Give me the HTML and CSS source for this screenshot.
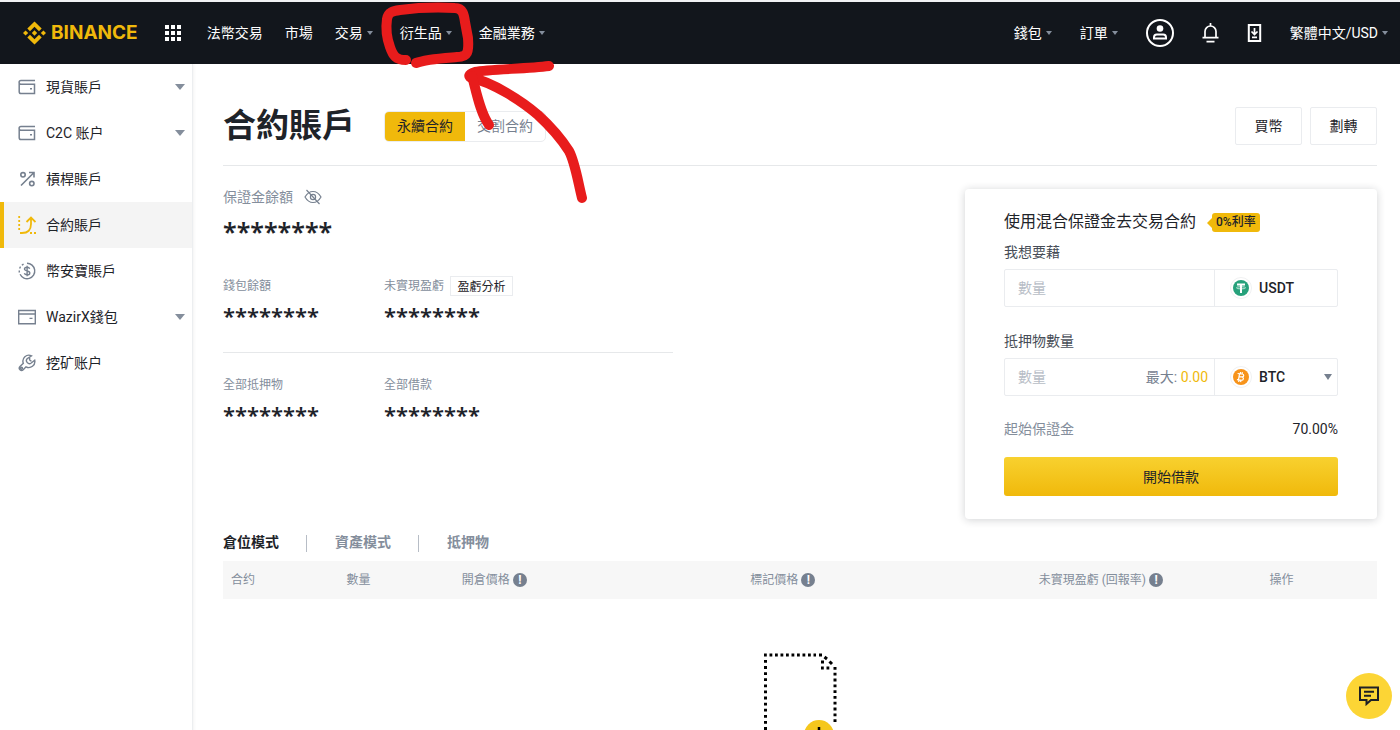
FILE: index.html
```html
<!DOCTYPE html>
<html lang="zh-Hant">
<head>
<meta charset="UTF-8">
<meta name="viewport" content="width=device-width, initial-scale=1.0">
<title>合約賬戶</title>
<link rel="stylesheet" href="styles.css">
</head>
<body>
<header class="header">
  <a class="logo" href="#">
    <svg width="23" height="24" viewBox="0 0 24 24" fill="#f0b90b">
      <path d="M7.3 10.1 12 5.4l4.7 4.7 2.8-2.7L12 0 4.5 7.4zM0 12l2.7-2.7L5.4 12l-2.7 2.7zM7.3 13.9l4.7 4.7 4.7-4.7 2.8 2.7L12 24l-7.5-7.4zM18.6 12l2.7-2.7L24 12l-2.7 2.7zM12 9.2l2.8 2.8-2.8 2.8L9.2 12z"/>
    </svg>
    <span>BINANCE</span>
  </a>
  <button class="icon-button apps" aria-label="apps">
    <svg width="16" height="16" viewBox="0 0 16 16" fill="#fff">
      <path d="M0 0h4v4H0zM6 0h4v4H6zM12 0h4v4h-4zM0 6h4v4H0zM6 6h4v4H6zM12 6h4v4h-4zM0 12h4v4H0zM6 12h4v4H6zM12 12h4v4h-4z"/>
    </svg>
  </button>
  <nav class="nav">
    <a href="#">法幣交易</a>
    <a href="#">市場</a>
    <a class="has-menu" href="#">交易</a>
    <a class="has-menu" href="#">衍生品</a>
    <a class="has-menu" href="#">金融業務</a>
  </nav>
  <div class="tools">
    <a class="tool-menu" href="#">錢包</a>
    <a class="tool-menu" href="#">訂單</a>
    <button class="icon-button" aria-label="account">
      <svg width="28" height="28" viewBox="0 0 28 28" fill="none" stroke="#fff" stroke-width="2">
        <circle cx="14" cy="14" r="13"/>
        <circle cx="14" cy="9.5" r="3.3" fill="#fff" stroke="none"/>
        <path d="M8 19.5v-1.2q0-2.8 2.8-2.8h6.4q2.8 0 2.8 2.8v1.2z"/>
      </svg>
    </button>
    <button class="icon-button" aria-label="notifications">
      <svg width="17" height="20" viewBox="0 0 17 20" fill="none" stroke="#fff" stroke-width="1.7">
        <path d="M8.5 0v3M3 14.5V8.5a5.5 5.5 0 0 1 11 0v6M.5 14.6h16M4.5 18.6h8"/>
      </svg>
    </button>
    <button class="icon-button" aria-label="download">
      <svg width="15" height="18" viewBox="0 0 15 18" fill="none" stroke="#fff" stroke-width="2">
        <path d="M1.8 1h11.4v16H1.8z"/>
        <path d="M7.5 4v6M4.5 7.5l3 3 3-3M5 13.3h5" stroke-width="1.7"/>
      </svg>
    </button>
    <a class="tool-menu" href="#">繁體中文/USD</a>
  </div>
</header>

<div class="page">
  <aside class="sidebar">
    <a class="side-item expandable" href="#">
      <svg class="side-icon" viewBox="0 0 18 18" fill="none" stroke="#76808f" stroke-width="1.5">
        <path d="M17 2.500H3a1.800 1.800 0 0 0 0 3.800H16.500v9.200H3q-1.800 0-1.800-1.800V4.500"/><path d="M12 10.800h2"/>
      </svg>
      <span>現貨賬戶</span>
    </a>
    <a class="side-item expandable" href="#">
      <svg class="side-icon" viewBox="0 0 18 18" fill="none" stroke="#76808f" stroke-width="1.5">
        <path d="M17 2.500H3a1.800 1.800 0 0 0 0 3.800H16.500v9.200H3q-1.800 0-1.800-1.800V4.500"/><path d="M12 10.800h2"/>
      </svg>
      <span>C2C 账户</span>
    </a>
    <a class="side-item" href="#">
      <svg class="side-icon" viewBox="0 0 18 18" fill="none" stroke="#76808f" stroke-width="1.6">
        <circle cx="5" cy="4.800" r="2.200"/><circle cx="13.800" cy="13.600" r="2.200"/><path d="M3 15.500 15.500 3M11 2.500h5v5"/>
      </svg>
      <span>槓桿賬戶</span>
    </a>
    <a class="side-item active" href="#">
      <svg class="side-icon" viewBox="0 0 18 18" fill="none" stroke="#f0b90b" stroke-width="1.8">
        <path d="M2 17h2c6 0 9-3 9-9V1.500M8.500 6 13 1.500 17.500 6"/>
        <path d="M1.200 0v14" stroke-dasharray="2 2"/><path d="M12 17h6" stroke-dasharray="2 2"/>
      </svg>
      <span>合約賬戶</span>
    </a>
    <a class="side-item" href="#">
      <svg class="side-icon" viewBox="0 0 18 18" fill="none" stroke="#76808f" stroke-width="1.4">
        <path d="M9 1.300a7.700 7.700 0 1 1-6.900 11"/><path d="M1.400 10.500A7.700 7.700 0 0 1 7.300 1.500" stroke-dasharray="2 2"/>
        <path d="M11.700 6.700c-.4-1-1.400-1.400-2.600-1.400-1.500 0-2.600.6-2.600 1.800 0 2.600 5.300 1.100 5.300 3.800 0 1.200-1.200 1.900-2.700 1.900-1.300 0-2.400-.5-2.800-1.600M9.100 3.800v10.500"/>
      </svg>
      <span>幣安寶賬戶</span>
    </a>
    <a class="side-item expandable" href="#">
      <svg class="side-icon" viewBox="0 0 18 18" fill="none" stroke="#76808f" stroke-width="1.4">
        <path d="M.7 2.500h16.600v13.200H.7zM.7 6h16.600M11.500 10.400h3"/>
      </svg>
      <span>WazirX錢包</span>
    </a>
    <a class="side-item" href="#">
      <svg class="side-icon" viewBox="0 0 18 18" fill="none" stroke="#76808f" stroke-width="1.4">
        <path d="M13.500 1.800A6 6 0 0 0 5.300 9.300L2 12.600a2.100 2.100 0 0 0 3.200 3.200L8 12.800a6 6 0 0 0 8.700-6.600L13.200 9a3 3 0 0 1-4.100-4.300z"/>
        <circle cx="3.500" cy="14.300" r="1"/><path d="M12 3.500c-1 1.500-.5 3.500 1.500 3.500"/>
      </svg>
      <span>挖矿账户</span>
    </a>
  </aside>

  <main class="main">
    <div class="title-row">
      <h1>合約賬戶</h1>
      <div class="switch">
        <button class="switch-on">永續合約</button>
        <button>交割合約</button>
      </div>
      <div class="actions">
        <button>買幣</button>
        <button>劃轉</button>
      </div>
    </div>

    <div class="overview">
      <section class="balances">
        <div class="margin-label">
          <span>保證金餘額</span>
          <button class="icon-button" aria-label="show balance">
            <svg width="18" height="16" viewBox="0 0 18 16" fill="none" stroke="#76808f" stroke-width="1.2">
              <path d="M1 8q3.200-5.500 8-5.500T17 8q-3.200 5.500-8 5.500T1 8z"/><circle cx="9" cy="8" r="2.600"/><path d="M2.500 1l13 14"/>
            </svg>
          </button>
        </div>
        <div class="stars-large">********</div>
        <div class="balance-row">
          <div>
            <div class="small-label">錢包餘額</div>
            <div class="stars">********</div>
          </div>
          <div>
            <div class="small-label">未實現盈虧 <button class="analysis">盈虧分析</button></div>
            <div class="stars">********</div>
          </div>
        </div>
        <div class="balance-row">
          <div>
            <div class="small-label">全部抵押物</div>
            <div class="stars">********</div>
          </div>
          <div>
            <div class="small-label">全部借款</div>
            <div class="stars">********</div>
          </div>
        </div>
      </section>

      <form class="card">
        <div class="card-title">
          <h2>使用混合保證金去交易合約</h2>
          <span class="rate">0%利率</span>
        </div>
        <label class="field-label" for="borrow">我想要藉</label>
        <div class="field">
          <input id="borrow" type="text" placeholder="數量">
          <div class="coin">
            <svg width="22" height="22" viewBox="0 0 22 22">
              <circle cx="11" cy="11" r="10.500" fill="#fff" stroke="#f0f1f2"/>
              <circle cx="11" cy="11" r="8" fill="#26a17b"/>
              <path d="M7 7.500h8M11 7.500V16" fill="none" stroke="#fff" stroke-width="2"/>
              <ellipse cx="11" cy="10.800" rx="4.500" ry="1.100" fill="none" stroke="#fff" stroke-width=".7"/>
            </svg>
            <span>USDT</span>
          </div>
        </div>
        <label class="field-label collateral" for="collateral">抵押物數量</label>
        <div class="field">
          <input id="collateral" type="text" placeholder="數量">
          <span class="max">最大: <b>0.00</b></span>
          <div class="coin coin-select">
            <svg width="22" height="22" viewBox="0 0 22 22">
              <circle cx="11" cy="11" r="10.500" fill="#fff" stroke="#f0f1f2"/>
              <circle cx="11" cy="11" r="8" fill="#f7931a"/>
              <path d="M9.600 7.300 8.400 14.400M7.600 7.500l4.500.5c2.400.3 2 3-.2 2.900l-2.700-.2 2.500.3c2.600.4 2 3.500-.6 3.200l-4.200-.5M10.600 6l-.3 1.700M12.400 6.200l-.3 1.700M9 14.200l-.3 1.800M10.900 14.400l-.3 1.800" fill="none" stroke="#fff" stroke-width="1.2"/>
            </svg>
            <select aria-label="抵押物"><option>BTC</option></select>
          </div>
        </div>
        <div class="initial">
          <span>起始保證金</span>
          <span class="initial-value">70.00%</span>
        </div>
        <button class="submit" type="button">開始借款</button>
      </form>
    </div>

    <div class="tabs">
      <button class="tab-on">倉位模式</button>
      <button>資產模式</button>
      <button>抵押物</button>
    </div>
    <table class="positions">
      <thead>
        <tr>
          <th class="narrow">合约</th>
          <th class="narrow">數量</th>
          <th class="wide">開倉價格 <span class="info">!</span></th>
          <th class="wide">標記價格 <span class="info">!</span></th>
          <th class="medium">未實現盈虧 (回報率) <span class="info">!</span></th>
          <th class="narrow">操作</th>
        </tr>
      </thead>
    </table>
    <div class="empty">
      <svg width="74" height="96" viewBox="0 0 74 96" fill="none">
        <g stroke="#000" stroke-width="3">
          <path d="M1 2h52" stroke-dasharray="2.800 2.700"/>
          <path d="M2.500 7V94" stroke-dasharray="2.800 3.300"/>
          <path d="M72 14v56" stroke-dasharray="2.800 3"/>
          <path d="M56 2h3M61.500 4l2.500 2M66.500 8.500l2.500 2.500"/>
          <path d="M58 15h10" stroke-dasharray="2.800 2.700"/>
          <path d="M59.500 7.500v3"/>
        </g>
        <circle cx="56" cy="82" r="15" fill="#f5c71c"/>
        <path d="M56 74v16M48 82h16" stroke="#000" stroke-width="2.5"/>
      </svg>
    </div>
  </main>
</div>

<button class="chat" aria-label="chat">
  <svg width="22" height="20" viewBox="0 0 22 20" fill="none" stroke="#1e2026" stroke-width="2">
    <path d="M2 1.500h18v12.500h-7l-4.500 4v-4H2zM6 5.700h10M6 9.700h7"/>
  </svg>
</button>

<!-- hand-drawn marker pointing at the derivatives menu -->
<svg class="marker" width="600" height="210" viewBox="0 0 600 210" fill="none" stroke="#e81c1c" stroke-width="10" stroke-linecap="round" stroke-linejoin="round">
  <path d="M406 60C396 60 393 56 390 47C386 36 386 26 387 19C388 12 393 11 400 10C415 8 435 7 455 8C463 8 464 15 465 22L468 38C469 52 468 57 457 57C445 58 426 59 416 63"/>
  <path d="M549 66C526 69 490 69 475 72C468 74 468 77 472 78C492 82 522 101 538 115C550 126 562 140 569 151C575 162 578 182 582 198"/>
  <path d="M472 76C476 90 480 113 489 125"/>
</svg>
</body>
</html>
```
FILE: styles.css
```css
* {
  box-sizing: border-box;
}

body {
  margin: 0;
  height: 100vh;
  overflow: hidden;
  font-family: Roboto, "Noto Sans CJK TC", sans-serif;
  font-size: 14px;
  line-height: 20px;
  color: #1e2329;
  background-color: #fff;
}

a {
  color: inherit;
  text-decoration: none;
}

button, input, select {
  font: inherit;
  color: inherit;
  padding: 0;
  border: none;
  background: none;
}

button {
  cursor: pointer;
}

svg {
  display: block;
}

h1, h2 {
  margin: 0;
}

.header {
  display: flex;
  align-items: center;
  height: 64px;
  padding: 0 12px 0 23px;
  border-top: 2px solid #f1f2f4;
  background-color: #12161c;
  color: #fff;
}

.logo {
  display: flex;
  align-items: center;
  gap: 5px;
  color: #f0b90b;
  font-family: Inter, sans-serif;
  font-size: 19px;
  font-weight: 700;
}

.apps {
  margin: 0 26px 0 27px;
}

.nav {
  display: flex;
  gap: 22px;
}

.has-menu, .tool-menu {
  display: flex;
  align-items: center;
}

.has-menu::after, .tool-menu::after {
  content: "";
  margin-left: 4px;
  border: 3px solid transparent;
  border-top: 4px solid #848e9c;
  border-bottom: none;
}

.has-menu {
  padding-right: 5px;
}

.tools {
  display: flex;
  align-items: center;
  gap: 28px;
  margin-left: auto;
}

.page {
  display: flex;
}

.sidebar {
  flex: none;
  width: 193px;
  min-height: calc(100vh - 64px);
  border-right: 1px solid #eceef0;
  box-shadow: 1px 0 3px rgba(0, 0, 0, 0.05);
}

.side-item {
  display: flex;
  align-items: center;
  gap: 10px;
  height: 46px;
  padding: 0 7px 0 14px;
  border-left: 4px solid transparent;
}

.side-icon {
  width: 18px;
  height: 18px;
}

.side-item.active {
  border-left-color: #f0b90b;
  background-color: #f4f4f4;
}

.expandable::after {
  content: "";
  margin-left: auto;
  border: 5px solid transparent;
  border-top: 6px solid #848e9c;
  border-bottom: none;
}

.main {
  flex: 1;
  padding: 0 23px 0 30px;
}

.title-row {
  display: flex;
  align-items: center;
  padding: 43px 0 20px;
  border-bottom: 1px solid #e6e8ea;
}

.title-row h1 {
  font-size: 33px;
  font-weight: 700;
  line-height: 38px;
}

.switch {
  display: flex;
  height: 31px;
  margin-left: 29px;
  border: 1px solid #eaecef;
  border-radius: 5px;
  overflow: hidden;
  color: #76808f;
}

.switch button {
  width: 80px;
}

.switch .switch-on {
  background-color: #f0b90b;
  color: #1e2329;
}

.actions {
  display: flex;
  gap: 8px;
  margin-left: auto;
}

.actions button {
  width: 67px;
  height: 38px;
  border: 1px solid #eaecef;
  border-radius: 2px;
}

.overview {
  display: flex;
  justify-content: space-between;
  padding-bottom: 13px;
}

.balances {
  width: 450px;
  padding-top: 21px;
}

.margin-label {
  display: flex;
  align-items: center;
  gap: 11px;
  color: #848e9c;
}

.stars-large, .stars {
  font-family: "Noto Sans", sans-serif;
  font-weight: 600;
}

.stars-large {
  margin: 8px 0 29px;
  font-size: 25px;
  line-height: 32px;
}

.stars {
  margin-top: 6px;
  font-size: 22px;
  line-height: 26px;
}

.balance-row {
  display: grid;
  grid-template-columns: 161px 1fr;
}

.balance-row + .balance-row {
  margin-top: 24px;
  padding-top: 22px;
  border-top: 1px solid #e6e8ea;
}

.small-label {
  display: flex;
  align-items: center;
  gap: 6px;
  height: 20px;
  font-size: 12px;
  color: #848e9c;
}

.analysis {
  width: 63px;
  height: 20px;
  border: 1px solid #eaecef;
  color: #1e2329;
}

.card {
  width: 412px;
  margin-top: 23px;
  padding: 21px 39px 23px;
  border-radius: 4px;
  box-shadow: 0 1px 8px rgba(24, 32, 42, 0.2);
}

.card-title {
  display: flex;
  align-items: center;
  gap: 16px;
}

.card-title h2 {
  font-size: 16px;
  font-weight: 400;
  line-height: 24px;
}

.rate {
  position: relative;
  padding: 0 4px;
  border-radius: 3px;
  background-color: #f0b90b;
  font-size: 12px;
  font-weight: 500;
  line-height: 19px;
}

.rate::before {
  content: "";
  position: absolute;
  top: 5px;
  left: -5px;
  border: 5px solid transparent;
  border-right-color: #f0b90b;
  border-left: none;
}

.field-label {
  display: block;
  margin: 8px 0 7px;
  color: #474d57;
}

.collateral {
  margin-top: 24px;
}

.field {
  display: flex;
  align-items: center;
  height: 38px;
  border: 1px solid #eaecef;
  border-radius: 2px;
}

.field input {
  flex: 1;
  min-width: 0;
  padding-left: 13px;
}

.field input::placeholder {
  color: #b7bdc6;
}

.max {
  margin-right: 6px;
  color: #76808f;
}

.max b {
  color: #f0b90b;
  font-weight: 400;
}

.coin {
  display: flex;
  align-items: center;
  gap: 7px;
  width: 123px;
  height: 36px;
  padding: 0 5px 0 15px;
  border-left: 1px solid #eaecef;
  font-weight: 500;
}

.coin select {
  flex: 1;
  appearance: none;
}

.coin-select::after {
  content: "";
  border: 4px solid transparent;
  border-top: 6px solid #76808f;
  border-bottom: none;
}

.initial {
  display: flex;
  justify-content: space-between;
  margin: 23px 0 18px;
  color: #848e9c;
}

.initial-value {
  color: #1e2329;
}

.submit {
  width: 100%;
  height: 39px;
  border-radius: 3px;
  background: linear-gradient(#f8d12f, #f0b90b);
}

.tabs {
  display: flex;
  align-items: center;
  padding-bottom: 9px;
  color: #848e9c;
}

.tabs button {
  font-weight: 700;
}

.tabs button + button::before {
  content: "";
  display: inline-block;
  width: 1px;
  height: 17px;
  margin: 0 28px 0 27px;
  background-color: #b7bdc6;
  vertical-align: middle;
}

.tabs .tab-on {
  color: #1e2329;
}

.positions {
  width: 100%;
  border-collapse: collapse;
  table-layout: fixed;
  background-color: #f7f7f7;
}

.positions th {
  height: 38px;
  padding: 0 8px;
  font-size: 12px;
  font-weight: 400;
  text-align: left;
  color: #848e9c;
}

.narrow {
  width: 10%;
}

.medium {
  width: 20%;
}

.wide {
  width: 25%;
}

.info {
  display: inline-block;
  width: 14px;
  height: 14px;
  border-radius: 50%;
  background-color: #76808f;
  color: #fff;
  font-weight: 700;
  line-height: 14px;
  text-align: center;
}

.empty {
  display: flex;
  justify-content: center;
  padding-top: 54px;
}

.chat {
  position: fixed;
  right: 8px;
  bottom: 11px;
  display: flex;
  align-items: center;
  justify-content: center;
  width: 46px;
  height: 46px;
  border-radius: 50%;
  background-color: #fcd535;
}

.marker {
  position: absolute;
  top: 0;
  left: 0;
  pointer-events: none;
}
```
